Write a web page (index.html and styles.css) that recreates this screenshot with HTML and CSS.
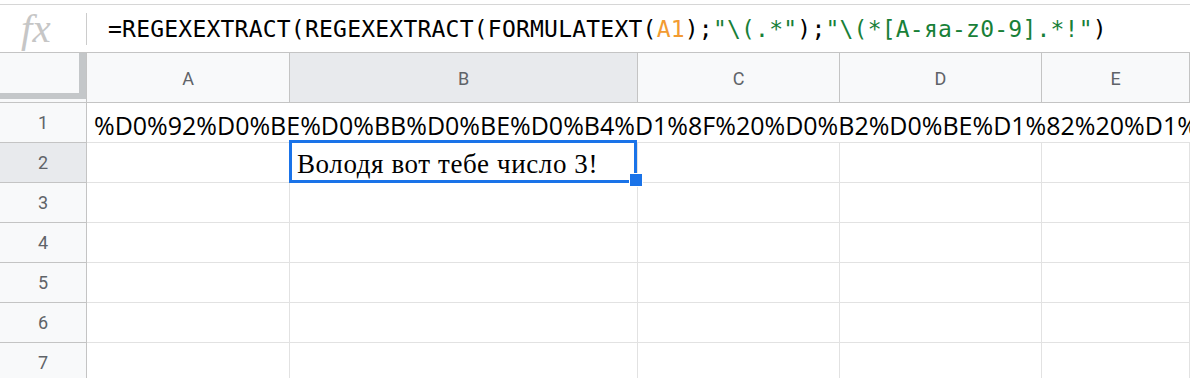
FILE: index.html
```html
<!DOCTYPE html>
<html lang="ru">

<head>
    <meta charset="UTF-8">
    <meta name="viewport" content="width=device-width, initial-scale=1.0">
    <title>Таблица</title>
    <link rel="stylesheet" href="styles.css">
</head>

<body>
    <div class="formula-bar">
        <div class="fx">fx</div>
        <div class="sep"></div>
        <div class="formula">=REGEXEXTRACT(REGEXEXTRACT(FORMULATEXT(<span class="ref">A1</span>);<span class="str">"\(.*"</span>);<span class="str">"\(*[А-яa-z0-9].*!"</span>)</div>
    </div>

    <div class="sheet">
        <!-- column headers -->
        <div class="corner"><div class="freeze"></div></div>
        <div class="col-head">A</div>
        <div class="col-head active">B</div>
        <div class="col-head">C</div>
        <div class="col-head">D</div>
        <div class="col-head">E</div>

        <!-- row 1: text overflows into the empty cells -->
        <div class="row-head">1</div>
        <div class="cell overflow">%D0%92%D0%BE%D0%BB%D0%BE%D0%B4%D1%8F%20%D0%B2%D0%BE%D1%82%20%D1%82%D0%B5%D0%B1%D0%B5%20%D1%87%D0%B8%D1%81%D0%BB%D0%BE%203!</div>

        <div class="row-head active">2</div>
        <div class="cell"></div>
        <div class="cell selected">Володя вот тебе число 3!<span class="handle"></span></div>
        <div class="cell"></div>
        <div class="cell"></div>
        <div class="cell"></div>

        <div class="row-head">3</div>
        <div class="cell"></div><div class="cell"></div><div class="cell"></div><div class="cell"></div><div class="cell"></div>

        <div class="row-head">4</div>
        <div class="cell"></div><div class="cell"></div><div class="cell"></div><div class="cell"></div><div class="cell"></div>

        <div class="row-head">5</div>
        <div class="cell"></div><div class="cell"></div><div class="cell"></div><div class="cell"></div><div class="cell"></div>

        <div class="row-head">6</div>
        <div class="cell"></div><div class="cell"></div><div class="cell"></div><div class="cell"></div><div class="cell"></div>

        <div class="row-head">7</div>
        <div class="cell"></div><div class="cell"></div><div class="cell"></div><div class="cell"></div><div class="cell"></div>
    </div>
</body>

</html>
```

FILE: styles.css
```css
body {
    margin: 0;
    padding: 0;
    overflow: hidden;
    background-color: #ffffff;
    font-family: "Roboto", "Liberation Sans", sans-serif;
}

.formula-bar {
    display: flex;
    align-items: center;
    height: 47px;
    margin-top: 4px;
    border-top: 1px solid #d6d6d6;
    border-bottom: 1px solid #c4c4c4;
}

.fx {
    width: 86px;
    padding-left: 21px;
    box-sizing: border-box;
    font-family: "Liberation Serif", serif;
    font-style: italic;
    font-size: 41px;
    color: #c6c6c6;
    line-height: 1;
}

.sep {
    width: 1px;
    height: 32px;
    background-color: #cccccc;
}

.formula {
    margin-left: 21px;
    font-family: "DejaVu Sans Mono", monospace;
    font-size: 23px;
    letter-spacing: 0.22px;
    color: #000000;
    white-space: nowrap;
}

.ref {
    color: #f29b32;
}

.str {
    color: #188038;
}

.sheet {
    display: grid;
    grid-template-columns: 87px 203px 348px 202px 202px 1fr;
    grid-template-rows: 50px repeat(7, 40px);
}

.corner,
.col-head,
.row-head {
    background-color: #f8f9fa;
    border-right: 1px solid #c4c4c4;
    border-bottom: 1px solid #c4c4c4;
    box-sizing: border-box;
    color: #5f6368;
    font-size: 18px;
    display: flex;
    align-items: center;
    justify-content: center;
}

.corner {
    align-items: flex-start;
    justify-content: flex-start;
}

.freeze {
    width: 86px;
    height: 46px;
    box-sizing: border-box;
    border-right: 7px solid #c4c7c9;
    border-bottom: 6px solid #c4c7c9;
}

.col-head {
    padding-top: 2px;
}

.active {
    background-color: #e8eaed;
}

.cell {
    border-right: 1px solid #e2e2e2;
    border-bottom: 1px solid #e2e2e2;
    box-sizing: border-box;
    display: flex;
    align-items: flex-end;
    padding: 0 0 1px 7px;
    white-space: nowrap;
}

.overflow {
    grid-column: 2 / -1;
    border-right: none;
    overflow: hidden;
    font-family: "Open Sans", sans-serif;
    font-size: 25px;
    padding-left: 7px;
    padding-bottom: 0;
    color: #000000;
}

.selected {
    position: relative;
    font-family: "Liberation Serif", serif;
    font-size: 27px;
    letter-spacing: 0.6px;
    padding-bottom: 2px;
    color: #000000;
}

.selected::after {
    content: "";
    position: absolute;
    top: -3px;
    left: -1px;
    right: 0;
    bottom: -1px;
    border: 3px solid #1a73e8;
}

.handle {
    position: absolute;
    right: -6px;
    bottom: -5px;
    width: 12px;
    height: 12px;
    background-color: #1a73e8;
    border: 1px solid #ffffff;
    z-index: 2;
}
```
